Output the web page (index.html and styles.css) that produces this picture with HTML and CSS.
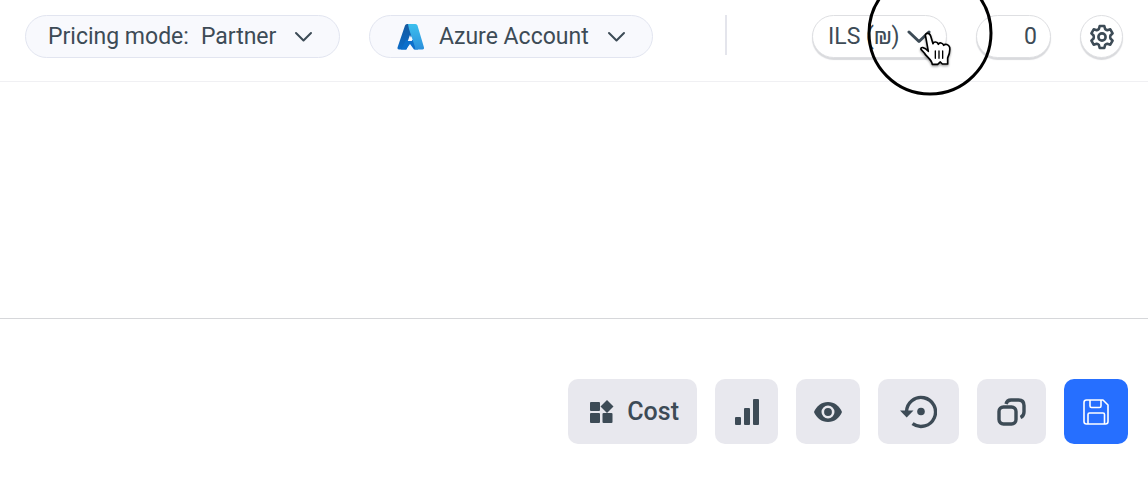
FILE: index.html
```html
<!DOCTYPE html>
<html lang="en">
<head>
	<meta charset="UTF-8">
	<title>Pricing</title>
	<link rel="stylesheet" href="styles.css">
</head>
<body>
	<header class="topbar">
		<label class="pill">
			<span>Pricing mode:</span>
			<select class="pill-select" name="mode">
				<option>Partner</option>
			</select>
			<svg class="chevron" width="19" height="12" viewBox="0 0 19 12"><path d="M2 2l7.500 7.500L17 2"/></svg>
		</label>
		<div class="pill account">
			<svg class="azure" width="28" height="28" viewBox="0 0 28 28">
				<defs>
					<linearGradient id="azure-dark" x1="0" y1="0" x2="0" y2="1">
						<stop offset="0" stop-color="#15599f"/>
						<stop offset="1" stop-color="#0b6cc8"/>
					</linearGradient>
					<linearGradient id="azure-light" x1="0" y1="0" x2="0" y2="1">
						<stop offset="0" stop-color="#3cc0ee"/>
						<stop offset="1" stop-color="#2b8fdc"/>
					</linearGradient>
				</defs>
				<path fill="url(#azure-dark)" d="M10 1h8l-3 11-5.500 14.500H2q-2 0-1.500-2L8 2.500Q8.500 1 10 1z"/>
				<path fill="#0c6fcb" d="M9 17h10l2 9.500h-4L13 21l-4 5.500H4z"/>
				<path fill="url(#azure-light)" d="M11 1h7.500q1.500 0 2 1.500l6.500 22q.5 2-1.500 2H17.500q1-.5.5-2.500L12 6z"/>
				<path fill="#f8f9fd" d="M13 12l2.200 6h-4.400z"/>
			</svg>
			<select class="pill-select" name="account" aria-label="Account">
				<option>Azure Account</option>
			</select>
			<svg class="chevron" width="19" height="12" viewBox="0 0 19 12"><path d="M2 2l7.500 7.500L17 2"/></svg>
		</div>
		<div class="divider"></div>
		<div class="right">
			<div class="pill raised currency">
				<select class="pill-select" name="currency" aria-label="Currency">
					<option>ILS (₪)</option>
				</select>
				<svg class="chevron bold" width="24" height="14" viewBox="0 0 24 14"><path d="M2 2l10 9.500L22 2"/></svg>
				<!-- click highlight and pointer -->
				<svg class="pointer" width="126" height="126" viewBox="0 0 126 126">
					<circle cx="63" cy="63" r="61" fill="none" stroke="#000" stroke-width="3"/>
					<g transform="translate(38 50) scale(.3333)" fill="#fff" stroke="#000" stroke-width="5" stroke-linejoin="round" stroke-linecap="round">
						<path class="hand" d="M62 50C58 38 73 36 77 48L84 71C86 64 97 64 100 73C103 66 113 68 116 76C121 70 131 74 134 82C136 96 133 104 128 114V132H112L106 126L98 133H82C80 118 65 111 58 99L48 88C46 80 58 80 70 94Z"/>
						<path d="M91 93v22M102 93v22M113 93v22" stroke-width="4"/>
					</g>
				</svg>
			</div>
			<button class="pill raised count" type="button">0</button>
			<button class="pill raised gear" type="button" aria-label="Settings">
				<svg width="26" height="26" viewBox="0 0 26 26" fill="none" stroke="#3d4b56" stroke-width="2.600" stroke-linejoin="round">
					<path d="M10.700 2h4.600l.8 3q1 .9 2.200 1.200l3-.9 2.300 4-2.200 2.200q-.4 1.500 0 3l2.200 2.200-2.300 4-3-.9q-1.200.3-2.200 1.200l-.8 3h-4.600l-.8-3q-1-.9-2.200-1.200l-3 .9-2.300-4 2.200-2.200q.4-1.500 0-3l-2.200-2.200 2.300-4 3 .9q1.200-.3 2.200-1.200z"/>
					<circle cx="13" cy="13" r="3.600"/>
				</svg>
			</button>
		</div>
	</header>

	<main class="content"></main>

	<footer class="toolbar">
		<button class="tool cost" type="button">
			<svg width="24" height="24" viewBox="0 0 24 24" fill="#3d4b56">
				<rect x="0" y="2" width="10" height="9" rx="1"/>
				<rect x="0" y="13" width="10" height="10" rx="1"/>
				<rect x="12.500" y="13" width="10" height="10" rx="1"/>
				<path d="M17 0L23.500 6.500 17 13 10.500 6.500z"/>
			</svg>
			<span>Cost</span>
		</button>
		<button class="tool" type="button" aria-label="Chart">
			<svg width="24" height="28" viewBox="0 0 24 28" fill="#3d4b56">
				<rect x="0" y="19" width="6" height="8" rx="1"/>
				<rect x="9" y="10" width="6" height="17" rx="1"/>
				<rect x="18" y="1" width="6" height="26" rx="1"/>
			</svg>
		</button>
		<button class="tool" type="button" aria-label="Preview">
			<svg width="28" height="20" viewBox="0 0 28 20">
				<path fill="#3d4b56" d="M14 0C7.500 0 2.500 4 0 10c2.500 6 7.500 10 14 10s11.500-4 14-10C25.500 4 20.500 0 14 0z"/>
				<circle cx="14" cy="10" r="5.200" fill="#3d4b56" stroke="#e8e8ee" stroke-width="2.600"/>
			</svg>
		</button>
		<button class="tool wide" type="button" aria-label="Restore">
			<svg width="37" height="34" viewBox="0 0 37 34">
				<path fill="none" stroke="#3d4b56" stroke-width="3.400" d="M6.500 17a14.500 14.500 0 1 1 6 11.700"/>
				<path fill="#3d4b56" d="M0 15.500h13.500L6.700 22.500z"/>
				<circle cx="21" cy="16.500" r="3.800" fill="#3d4b56"/>
			</svg>
		</button>
		<button class="tool medium" type="button" aria-label="Duplicate">
			<svg width="29" height="28" viewBox="0 0 29 28" fill="none" stroke="#3d4b56" stroke-width="3.400">
				<rect x="2" y="9" width="17" height="17" rx="4.500"/>
				<path d="M9 6q1-4 5-4h7.500Q27 2 27 7.500v6.500q0 4-3.500 5.500"/>
			</svg>
		</button>
		<button class="tool save" type="button" aria-label="Save">
			<svg width="26" height="26" viewBox="0 0 26 26" fill="none" stroke="#fff" stroke-width="1.600" stroke-linejoin="round">
				<path d="M3.500 1H20l5 5v16.500q0 2.500-2.500 2.500h-19Q1 25 1 22.500v-19Q1 1 3.500 1z"/>
				<path d="M7 1v6q0 1.500 1.500 1.500h8Q18 8.500 18 7V1M5 25v-9.500Q5 14 6.500 14h13.500q1.500 0 1.500 1.500V25"/>
			</svg>
		</button>
	</footer>
</body>
</html>
```

FILE: styles.css
```css
* {
	box-sizing: border-box;
}
body {
	margin: 0;
	font-family: Roboto, sans-serif;
	font-size: 23px;
	color: #3d4b56;
	background-color: #fff;
	overflow: hidden;
}
button, select {
	font: inherit;
	color: inherit;
	cursor: pointer;
}

/* Top bar */
.topbar {
	display: flex;
	align-items: flex-start;
	padding: 15px 25px 23px;
	border-bottom: 1px solid #f0f0f3;
}
.pill {
	display: flex;
	align-items: center;
	height: 43px;
	padding: 0 26px 0 22px;
	border: 1px solid #e2e5f0;
	border-radius: 22px;
	background-color: #f8f9fd;
	white-space: nowrap;
}
.pill-select {
	appearance: none;
	margin: 0 17px 0 12px;
	padding: 0;
	border: none;
	background: none;
}
.chevron {
	fill: none;
	stroke: #3d4b56;
	stroke-width: 2;
	stroke-linecap: round;
	stroke-linejoin: round;
}
.chevron.bold {
	stroke-width: 3;
}
.account {
	margin-left: 29px;
	padding-left: 27px;
}
.azure {
	margin-right: 2px;
}
.account .pill-select {
	margin-right: 18px;
}
.divider {
	width: 2px;
	height: 40px;
	margin-left: 72px;
	background-color: #e4e5ec;
}
.right {
	display: flex;
	gap: 29px;
	margin-left: auto;
}
.raised {
	border-color: #dedfe2;
	background-color: #fff;
	box-shadow: 0 2px 1px #d9dadd;
}
.currency {
	position: relative;
	padding: 0 15px;
}
.currency .pill-select {
	margin: 0 7px 0 0;
}
.pointer {
	position: absolute;
	top: -46px;
	left: 54px;
	pointer-events: none;
}
.hand {
	filter: drop-shadow(0 4px 3px rgba(0, 0, 0, 0.4));
}
.count {
	justify-content: flex-end;
	width: 75px;
	padding: 0 13px;
}
.gear {
	justify-content: center;
	width: 43px;
	padding: 0;
}

/* Empty work area */
.content {
	height: 237px;
	border-bottom: 1px solid #d6d7da;
}

/* Bottom toolbar */
.toolbar {
	display: flex;
	justify-content: flex-end;
	gap: 18px;
	padding: 60px 20px 40px;
}
.tool {
	display: flex;
	align-items: center;
	justify-content: center;
	min-width: 63px;
	height: 65px;
	padding: 0 18px;
	border: none;
	border-radius: 10px;
	background-color: #e8e8ee;
}
.cost {
	gap: 13px;
	padding-left: 22px;
	font-size: 25px;
	font-weight: 500;
}
.wide {
	padding: 0 22px;
}
.medium {
	padding: 0 20px;
}
.save {
	padding: 0 19px;
	background-color: #266fff;
}
```
